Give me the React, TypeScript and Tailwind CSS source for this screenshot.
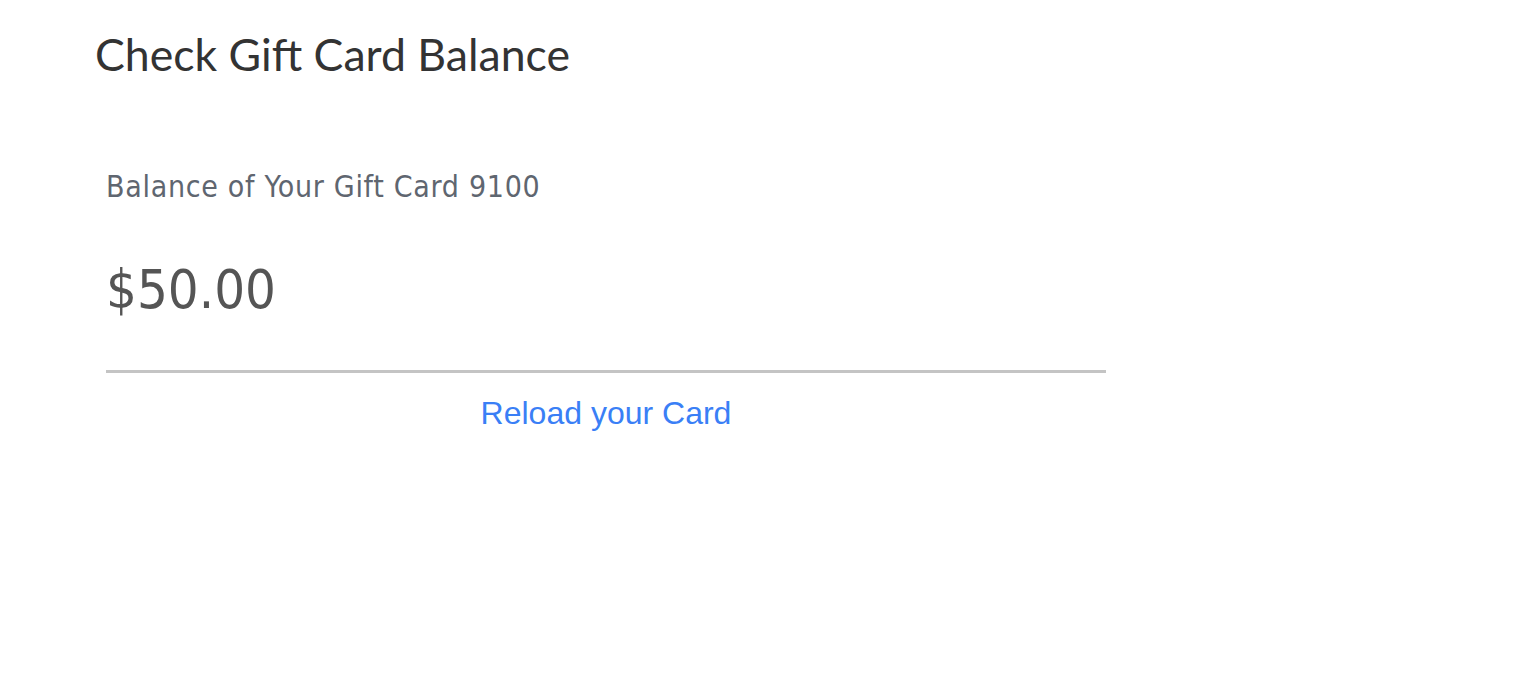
import React from 'react';

function App() {
  return (
    <div className="min-h-screen bg-white">
      <div className="pl-[95px] pt-[26px]">
        <h1 className="text-[44.6px] leading-[56px] text-[#333333] font-['Lato',sans-serif]">
          Check Gift Card Balance
        </h1>
        <div className="w-[1000px] ml-[11px] mt-[85px]">
          <p className="text-[30px] leading-[40px] tracking-[0.7px] text-[#5f6670] font-['DejaVu_Sans_Condensed','DejaVu_Sans',sans-serif]">
            Balance of Your Gift Card 9100
          </p>
          <p className="mt-[51px] text-[54px] leading-[64px] text-[#555555] font-['DejaVu_Sans_Condensed','DejaVu_Sans',sans-serif]">
            $50.00
          </p>
          <div className="mt-[48px] h-[3px] bg-[#c4c4c4]" />
          <div className="mt-[20px] text-center">
            <a href="#" className="text-[32px] leading-[40px] text-[#3a7ff6] font-['Liberation_Sans',Arial,sans-serif]">
              Reload your Card
            </a>
          </div>
        </div>
      </div>
    </div>
  );
}

export default App;
